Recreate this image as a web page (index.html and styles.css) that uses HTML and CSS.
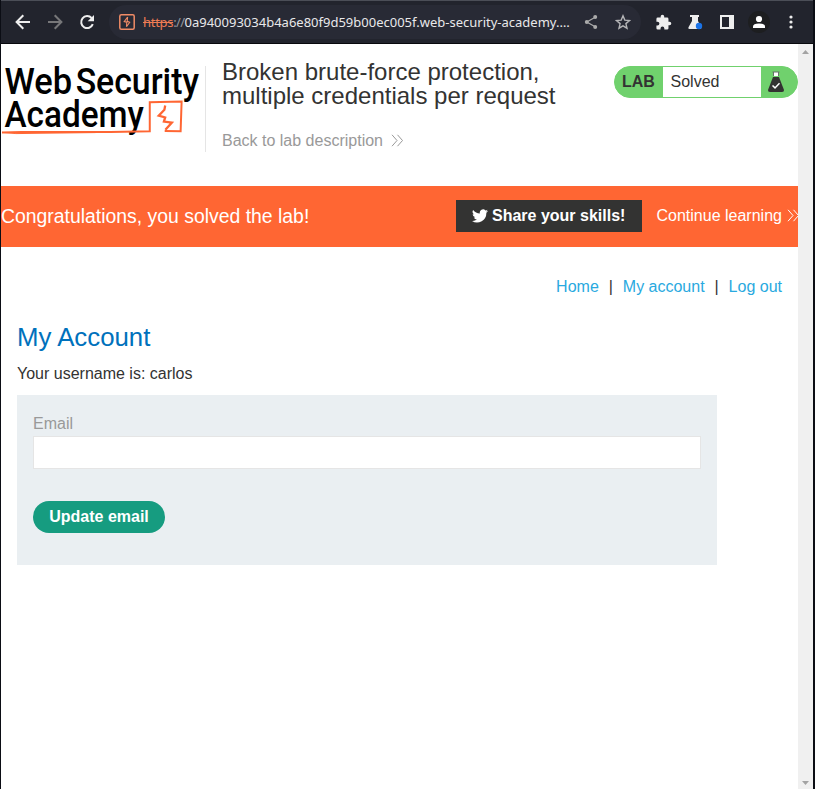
FILE: index.html
```html
<!DOCTYPE html>
<html lang="en">
<head>
<meta charset="utf-8">
<title>Broken brute-force protection, multiple credentials per request</title>
<link rel="stylesheet" href="styles.css">
</head>
<body>
<div class="window">
  <div class="toolbar">
    <span class="tool"><svg width="20" height="20" viewBox="0 0 20 20"><path d="M17 10H4M10.3 3.3L3.6 10l6.7 6.7" fill="none" stroke="#eee" stroke-width="2"/></svg></span>
    <span class="tool"><svg width="20" height="20" viewBox="0 0 20 20"><path d="M3 10h13M9.7 3.3l6.7 6.7-6.7 6.7" fill="none" stroke="#777779" stroke-width="2"/></svg></span>
    <span class="tool"><svg width="20" height="20" viewBox="0 0 20 20"><path d="M15.8 12.2A6 6 0 1 1 14.6 6" fill="none" stroke="#eee" stroke-width="2"/><path d="M17 3v6.3h-6.3z" fill="#eee"/></svg></span>
    <div class="address">
      <svg width="16" height="16" viewBox="0 0 16 16"><rect x=".8" y=".8" width="14.4" height="14.4" rx="1.5" fill="none" stroke="#f08b66" stroke-width="1.5"/><path d="M8.600 3L5.200 7.600l2.600.6-.3 4.600M8.600 3l-.4 4.300 2.500 1L7.500 12.800" fill="none" stroke="#f08b66" stroke-width="1.100"/></svg>
      <span class="url"><span class="scheme">https</span><span class="slashes">://</span>0a940093034b4a6e80f9d59b00ec005f.web-security-academy.…</span>
      <span class="tool"><svg width="16" height="16" viewBox="0 0 16 16"><path d="M12.2 3.2L3.8 8l8.4 4.8" fill="none" stroke="#aaa" stroke-width="1.3"/><g fill="#aaa"><circle cx="12.2" cy="3.1" r="2"/><circle cx="3.8" cy="8" r="2"/><circle cx="12.2" cy="12.9" r="2"/></g></svg></span>
      <span class="tool"><svg width="16" height="16" viewBox="0 0 16 16"><path d="M8 1.8l1.8 4.3 4.7.4-3.6 3.1 1.1 4.6L8 11.8l-4 2.4 1.1-4.6-3.6-3.1 4.7-.4z" fill="none" stroke="#b4b4b6" stroke-width="1.4"/></svg></span>
    </div>
    <span class="tool first"><svg width="17" height="17" viewBox="0 0 24 24"><path d="M20.5 11H19V7a2 2 0 0 0-2-2h-4V3.500a2.500 2.500 0 0 0-5 0V5H4a2 2 0 0 0-2 2v3.800h1.500a2.700 2.700 0 0 1 0 5.400H2V20a2 2 0 0 0 2 2h3.800v-1.500a2.700 2.700 0 0 1 5.400 0V22H17a2 2 0 0 0 2-2v-4h1.500a2.500 2.500 0 0 0 0-5z" fill="#eee"/></svg></span>
    <span class="tool"><svg width="18" height="18" viewBox="0 0 18 18"><path d="M4 2h9v2h-1v4l3.200 6.200q.5 1.800-1.200 1.800H3.500Q1.600 16 2.500 14.200L6 8V4H4z" fill="#eee"/><circle cx="13" cy="13" r="3.200" fill="#1a73e8"/></svg></span>
    <span class="tool"><svg width="14" height="14" viewBox="0 0 14 14"><path d="M0 0h14v14H0zM2 2v10h7V2z" fill="#eee" fill-rule="evenodd"/></svg></span>
    <span class="tool"><svg width="22" height="22" viewBox="0 0 22 22"><circle cx="11" cy="11" r="11" fill="#1d1e20"/><circle cx="11" cy="8" r="3.100" fill="#fff"/><path d="M5 17v-1.500q0-3 6-3t6 3V17z" fill="#fff"/></svg></span>
    <span class="tool"><svg width="4" height="14" viewBox="0 0 4 14"><g fill="#eee"><circle cx="2" cy="2" r="1.600"/><circle cx="2" cy="7" r="1.600"/><circle cx="2" cy="12" r="1.600"/></g></svg></span>
  </div>
  <div class="viewport">
    <main class="page">
      <header class="lab-header">
        <svg class="logo" width="205" height="86" viewBox="0 0 205 86">
          <g class="logo-text">
            <text x="3.500" y="28" textLength="68" lengthAdjust="spacingAndGlyphs">Web</text>
            <text x="75" y="28" textLength="124" lengthAdjust="spacingAndGlyphs">Security</text>
            <text x="3.500" y="61" textLength="140" lengthAdjust="spacingAndGlyphs">Academy</text>
          </g>
          <path d="M1 66.500l20-.3 89-.2 39.500-.7V36.200l32-.7-1 29.800-16-.2" fill="none" stroke="#ff6633" stroke-width="2"/>
          <path d="M1 66.500l14 1.200 80-1" fill="none" stroke="#ff6633" stroke-width="1"/>
          <path d="M165 39.500l-.8 4.200-5.700 6 6.500 1.800-1.300 4.200 8 1-6.500 7.200" fill="none" stroke="#ff6633" stroke-width="2.300"/>
        </svg>
        <div class="heading">
          <h2>Broken brute-force protection,<br>multiple credentials per request</h2>
          <a class="back">Back to lab description<svg class="chevrons" width="13" height="13" viewBox="0 0 13 13"><path d="M1 .8l5 5.700-5 5.700M6.500.8l5 5.700-5 5.700" fill="none" stroke="currentColor"/></svg></a>
        </div>
        <div class="status">
          <span class="lab">LAB</span>
          <span class="state">Solved</span>
          <svg width="20" height="24" viewBox="0 0 20 24"><path d="M7 2h6v4H7z" fill="#fff"/><path d="M6.500 2h7M7.500 2v4M12.500 2v4" stroke="#66736a" fill="none"/><path d="M7 7h6l5 13q.3 2-2 2H4q-2.300 0-2-2z" fill="#333332"/><path d="M6.500 15.500l2.500 2.400 4.500-4.700" fill="none" stroke="#fff" stroke-width="1.500"/></svg>
        </div>
      </header>
      <section class="banner">
        <h4>Congratulations, you solved the lab!</h4>
        <a class="share"><svg width="16" height="14" viewBox="0 0 24 20"><path d="M24 2.400a10 10 0 0 1-2.800.8A5 5 0 0 0 23.300.5a10 10 0 0 1-3.100 1.200 4.900 4.900 0 0 0-8.400 4.500A14 14 0 0 1 1.700 1a4.900 4.900 0 0 0 1.500 6.600A5 5 0 0 1 1 7a5 5 0 0 0 3.900 4.900 5 5 0 0 1-2.200.1 5 5 0 0 0 4.600 3.400A10 10 0 0 1 0 17.500 14 14 0 0 0 21.500 5 10 10 0 0 0 24 2.400z" fill="#fff"/></svg>Share your skills!</a>
        <a class="continue">Continue learning<svg class="chevrons" width="13" height="13" viewBox="0 0 13 13"><path d="M1 .8l5 5.700-5 5.700M6.500.8l5 5.700-5 5.700" fill="none" stroke="currentColor"/></svg></a>
      </section>
      <nav class="links"><a>Home</a><span>|</span><a>My account</a><span>|</span><a>Log out</a></nav>
      <section class="account">
        <h1>My Account</h1>
        <p>Your username is: carlos</p>
        <form class="email-form">
          <label for="email">Email</label>
          <input id="email" type="email">
          <button type="button">Update email</button>
        </form>
      </section>
    </main>
    <div class="scrollbar">
      <svg width="7" height="4" viewBox="0 0 7 4"><path d="M0 4L3.500 0 7 4z" fill="#a3a3a3"/></svg>
      <svg width="7" height="4" viewBox="0 0 7 4"><path d="M0 0h7L3.500 4z" fill="#a3a3a3"/></svg>
    </div>
  </div>
</div>
</body>
</html>
```
FILE: styles.css
```css
* { box-sizing: border-box; }
body { margin: 0; font: 16px/20px "Liberation Sans", Arial, sans-serif; color: #333332; background: #0b0d14; }
h1, h2, h4, p { margin: 0; font-weight: 400; }
svg { display: block; flex: none; }
.window { height: 789px; padding: 0 2px 0 1px; display: flex; flex-direction: column; overflow: hidden; }
.toolbar { height: 44px; flex: none; display: flex; align-items: center; padding-left: 6px; background: #22242d; border-top: 1px solid #4b4e57; border-bottom: 1px solid #08090d; }
.tool { width: 32px; height: 32px; flex: none; display: flex; align-items: center; justify-content: center; }
.tool.first { margin-left: 6px; }
.address { width: 532px; height: 34px; flex: none; margin-left: 6px; padding-left: 10px; display: flex; align-items: center; border-radius: 17px; background: #282a35; }
.url { width: 432px; margin-left: 8px; white-space: nowrap; font: 13px/18px "Noto Sans", sans-serif; color: #e8e8ea; }
.scheme { color: #ee7c54; text-decoration: line-through; letter-spacing: -0.3px; }
.slashes { color: #95969c; letter-spacing: -0.6px; }
.viewport { flex: 1; display: flex; background: #fff; }
.page { width: 797px; }
.lab-header { height: 142px; display: flex; align-items: flex-start; padding-top: 22px; }
.logo { border-right: 1px solid #e5e5e5; width: 205px; overflow: visible; }
.logo-text { font: 500 37px Roboto, sans-serif; fill: #000; }
.heading { width: 392px; padding-left: 16px; margin-top: -6px; }
.heading h2 { font-size: 24px; line-height: 24px; white-space: nowrap; }
.back { display: flex; align-items: center; gap: 8px; margin-top: 23px; color: #999; line-height: 20px; }
.back .chevrons { margin-top: -2px; }
.status { width: 184px; height: 32px; margin-left: 16px; display: flex; align-items: center; border: 1px solid #70d16d; border-radius: 16px; background: #70d16d; }
.lab { width: 48px; padding-left: 7px; font-weight: 700; }
.state { width: 98px; height: 30px; padding-left: 7.5px; line-height: 30px; background: #fff; }
.status svg { margin-left: 5px; }
.banner { height: 61px; display: flex; align-items: center; color: #fff; background: #ff6633; overflow: hidden; }
.banner h4 { width: 455px; margin-top: -2px; font-size: 19.4px; white-space: nowrap; flex: none; }
.share { width: 186px; height: 32px; flex: none; margin-top: -2px; padding-left: 16px; display: flex; align-items: center; gap: 4px; font-weight: 700; white-space: nowrap; background: #333332; }
.continue { margin: -2px 0 0 14.5px; display: flex; align-items: center; gap: 5px; white-space: nowrap; }
.links { display: flex; justify-content: flex-end; padding: 30px 16px 0 0; color: #29a9e0; }
.links span { width: 24px; text-align: center; color: #333332; }
.account { padding: 25px 16px 0; }
.account h1 { font-size: 25.8px; line-height: 30px; color: #0071bc; }
.account p { margin-top: 12px; }
.email-form { width: 700px; height: 170px; margin-top: 11px; padding: 19px 16px 0; display: flex; flex-direction: column; align-items: flex-start; background: #eaeff2; }
.email-form label { color: #999; }
.email-form input { width: 668px; height: 33px; margin-top: 2px; padding: 4px 8px; border: 1px solid #e5e5e5; background: #fff; font: inherit; }
.email-form button { height: 32px; width: 132px; margin-top: 32px; padding: 0; border: 0; border-radius: 16px; font: 700 16px "Liberation Sans", Arial, sans-serif; color: #fff; background: #169c80; }
.scrollbar { width: 15px; display: flex; flex-direction: column; justify-content: space-between; align-items: center; padding: 6px 0 4px; background: #f0f0f0; }
```
